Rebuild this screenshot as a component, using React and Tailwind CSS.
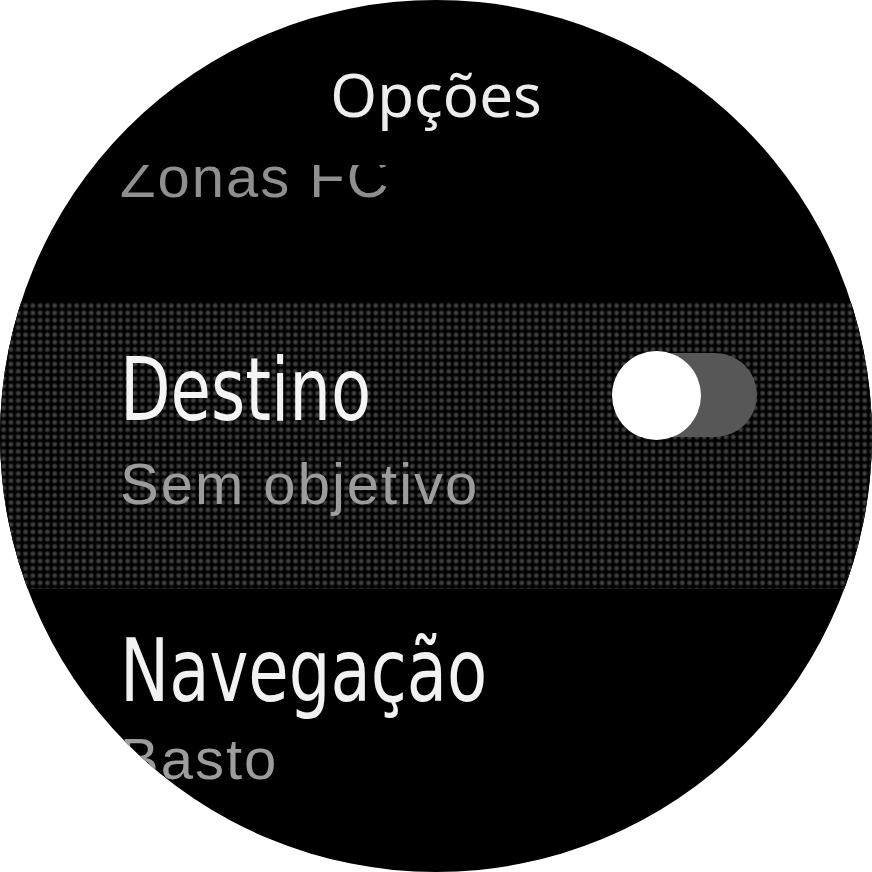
export default function App() {
  const narrow = "font-['DejaVu_Sans_Condensed','DejaVu_Sans',sans-serif] origin-left scale-x-[0.83]";
  const sub = "font-['Liberation_Sans',Arial,sans-serif]";
  return (
    <div className="w-[872px] h-[872px] bg-white">
      <div className="w-[872px] h-[872px] rounded-full bg-black overflow-hidden flex flex-col">
        <div className="h-[165px] shrink-0 pt-[64px] flex justify-center">
          <div className="font-['Noto_Sans','Open_Sans',sans-serif] text-[60px] leading-[60px] text-[#ededed]">
            Opções
          </div>
        </div>
        <div className="flex-1 overflow-hidden">
          <div className="-mt-[158px]">
            <div className="h-[295px] pt-[38px] pl-[120px]">
              <div className={`${narrow} text-[88px] leading-[88px] text-[#f2f2f2]`}>Intensidade</div>
              <div className={`${sub} mt-[15px] text-[58px] leading-[58px] tracking-[2px] text-[#8f8f8f]`}>Zonas FC</div>
            </div>
            <div className="h-[287px] pt-[38px] pl-[120px] pr-[115px] bg-black bg-[radial-gradient(circle,#505050_0,#303030_1.8px,transparent_3.4px)] bg-[length:7.3px_7.3px]">
              <div className="flex items-center justify-between">
                <div className={`${narrow} text-[88px] leading-[88px] text-[#f4f4f4]`}>Destino</div>
                <div className="relative w-[145px] h-[90px] mt-[10px] flex items-center">
                  <div className="absolute right-0 top-[3px] w-[130px] h-[84px] rounded-full bg-[#575757]" />
                  <div className="relative w-[89px] h-[89px] rounded-full bg-white" />
                </div>
              </div>
              <div className={`${sub} mt-[15px] text-[58px] leading-[58px] tracking-[2px] text-[#9c9c9c]`}>Sem objetivo</div>
            </div>
            <div className="h-[287px] pt-[38px] pl-[120px]">
              <div className={`${narrow} text-[88px] leading-[88px] text-[#f2f2f2]`}>Navegação</div>
              <div className={`${sub} mt-[15px] text-[58px] leading-[58px] tracking-[2px] text-[#9c9c9c]`}>Basto</div>
            </div>
          </div>
        </div>
      </div>
    </div>
  );
}
